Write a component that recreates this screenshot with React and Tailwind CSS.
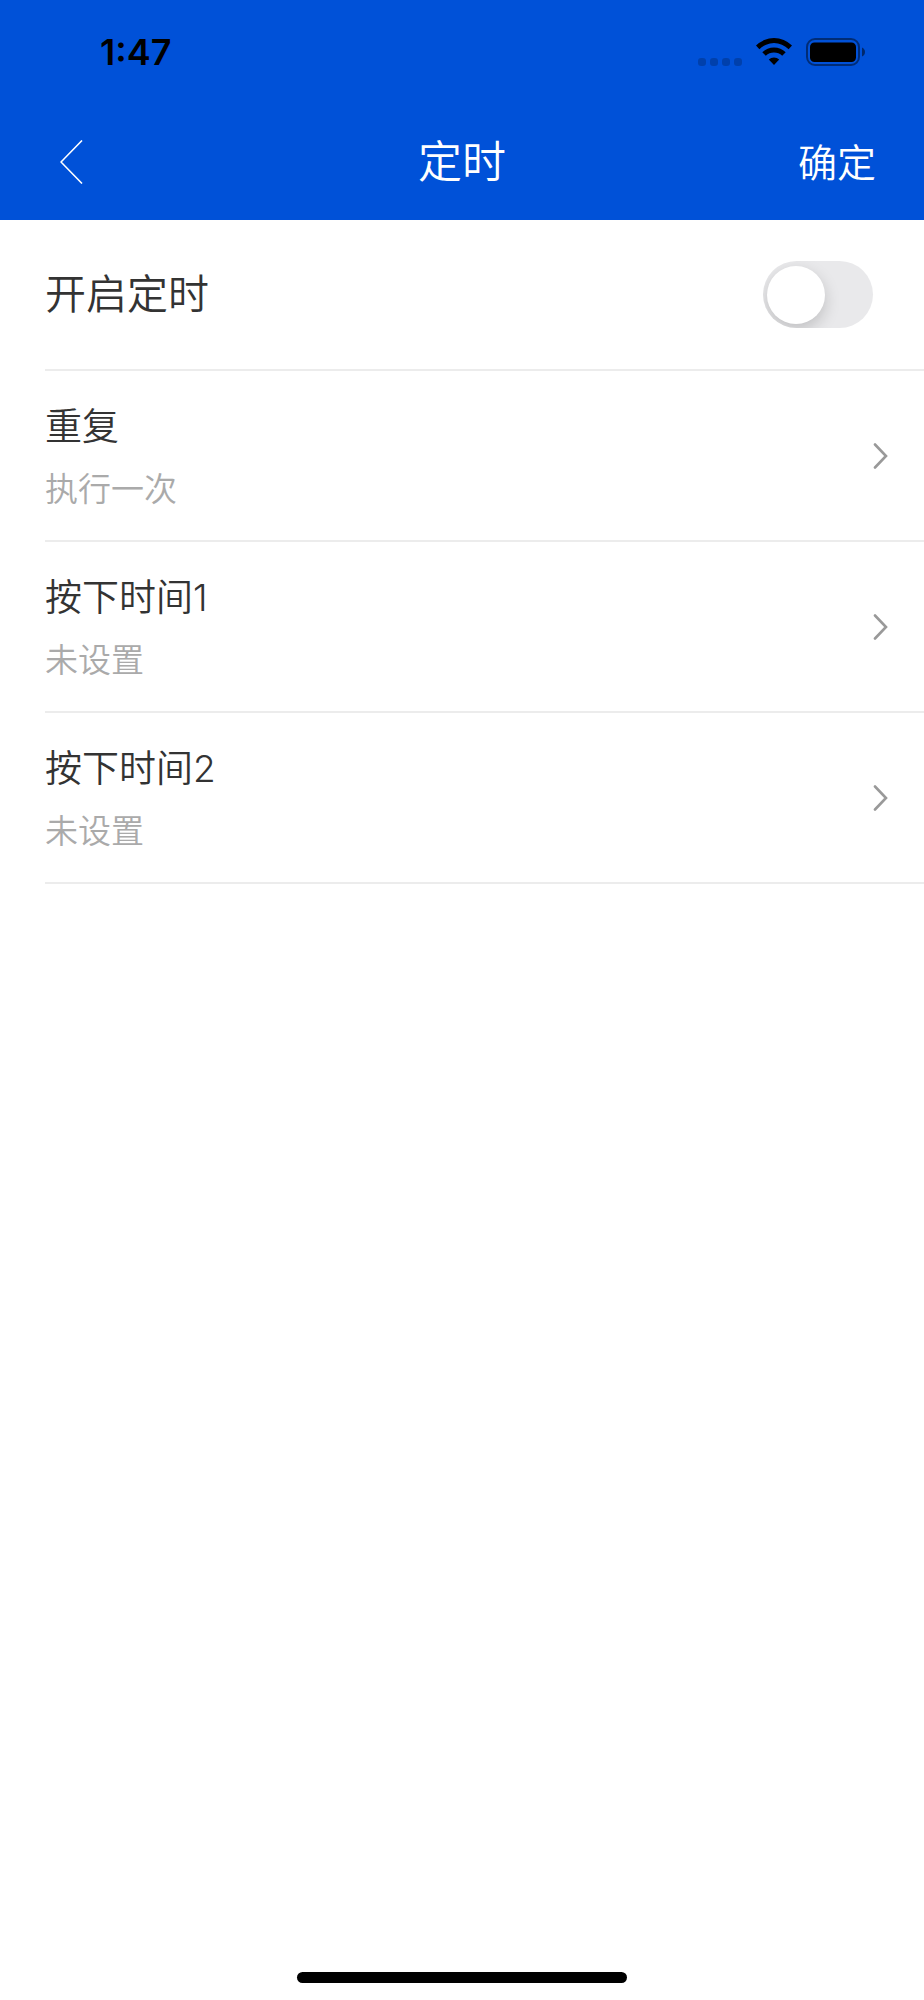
import { useState } from "react";

const rows = [
  { id: "repeat", title: "重复", value: "执行一次" },
  { id: "press1", title: "按下时间1", value: "未设置" },
  { id: "press2", title: "按下时间2", value: "未设置" },
];

function WifiIcon() {
  return (
    <svg width="36" height="28" viewBox="0 0 36 28">
      <path d="M0 7.6A25.4 25.4 0 0 1 36 7.6L32.6 11.2A20.5 20.5 0 0 0 3.4 11.2Z" />
      <path d="M6.3 14.2A16.8 16.8 0 0 1 29.7 14.2L26.2 17.7A11.8 11.8 0 0 0 9.8 17.7Z" />
      <path d="M18 27L12.8 21.4A7.8 7.8 0 0 1 23.2 21.4Z" />
    </svg>
  );
}

function BatteryIcon() {
  return (
    <svg width="59" height="28" viewBox="0 0 59 28" fill="none">
      <rect x="1" y="1" width="52" height="26" rx="8" stroke="#000" strokeOpacity="0.45" strokeWidth="2" />
      <rect x="4" y="4.5" width="46" height="19.5" rx="4.5" fill="#000" />
      <path d="M56 9.5C58 10.5 59 12 59 14C59 16 58 17.5 56 18.5Z" fill="#000" fillOpacity="0.5" />
    </svg>
  );
}

function StatusBar() {
  return (
    <div className="flex h-26 items-center justify-between pr-[59px] pl-25">
      <span className="text-[36px] leading-none font-semibold text-black">1:47</span>
      <div className="flex items-center">
        {/* No cellular signal */}
        <div className="mr-3.5 flex gap-1 self-end">
          {[0, 1, 2, 3].map((n) => (
            <span key={n} className="h-2 w-2 rounded-[3px] bg-black/20" />
          ))}
        </div>
        <div className="flex items-center gap-3.5">
          <WifiIcon />
          <BatteryIcon />
        </div>
      </div>
    </div>
  );
}

function NavBar() {
  return (
    <div className="grid h-29 grid-cols-3 items-center text-white">
      <button aria-label="返回" className="justify-self-start py-4 pr-6 pl-15">
        <svg width="23" height="44" viewBox="0 0 23 44" fill="none" stroke="currentColor" strokeWidth="1.6">
          <path d="M22 0.5L1 22L22 43.5" />
        </svg>
      </button>
      <h1 className="text-center text-[44px] leading-none font-[350]">定时</h1>
      <button className="justify-self-end pr-12 text-[39px] leading-none font-[350]">
        确定
      </button>
    </div>
  );
}

function SettingRow({ title, value }) {
  return (
    <button className="flex w-full items-center justify-between border-b-2 border-[#ececec] py-[26px] pr-9 text-left">
      <span className="flex flex-col gap-2">
        <span className="text-[37px] leading-[60px] font-[350] text-[#333]">{title}</span>
        <span className="text-[33px] leading-[49px] font-[350] text-[#aaa]">{value}</span>
      </span>
      <svg width="16" height="26" viewBox="0 0 16 26" fill="none" stroke="#999" strokeWidth="2.6" strokeLinecap="round">
        <path d="M3 1.5L14 13L3 24.5" />
      </svg>
    </button>
  );
}

export default function App() {
  const [enabled, setEnabled] = useState(false);

  return (
    <div
      lang="zh-CN"
      className="flex min-h-screen flex-col bg-white font-['Inter','Noto_Sans_CJK_SC',sans-serif]"
    >
      <header className="bg-[#0051d8]">
        <StatusBar />
        <NavBar />
      </header>

      <main className="flex-1 pl-[45px]">
        <div className="flex items-center justify-between border-b-2 border-[#ececec] py-10 pr-[51px]">
          <label htmlFor="timer" className="text-[41px] leading-[69px] font-[350] text-[#333]">
            开启定时
          </label>
          <input
            id="timer"
            type="checkbox"
            role="switch"
            checked={enabled}
            onChange={(e) => setEnabled(e.target.checked)}
            className="flex h-[67px] w-[110px] shrink-0 cursor-pointer appearance-none items-center overflow-hidden rounded-full bg-[#e9e9eb] px-1 transition-colors before:h-[58px] before:w-[58px] before:rounded-full before:bg-white before:shadow-[0_6px_16px_rgba(0,0,0,0.18)] before:transition-transform checked:bg-[#0051d8] checked:before:translate-x-11"
          />
        </div>

        {rows.map((row) => (
          <SettingRow key={row.id} title={row.title} value={row.value} />
        ))}
      </main>

      {/* Home indicator */}
      <footer className="flex justify-center pb-[17px]">
        <div className="h-[11px] w-[330px] rounded-full bg-black" />
      </footer>
    </div>
  );
}
